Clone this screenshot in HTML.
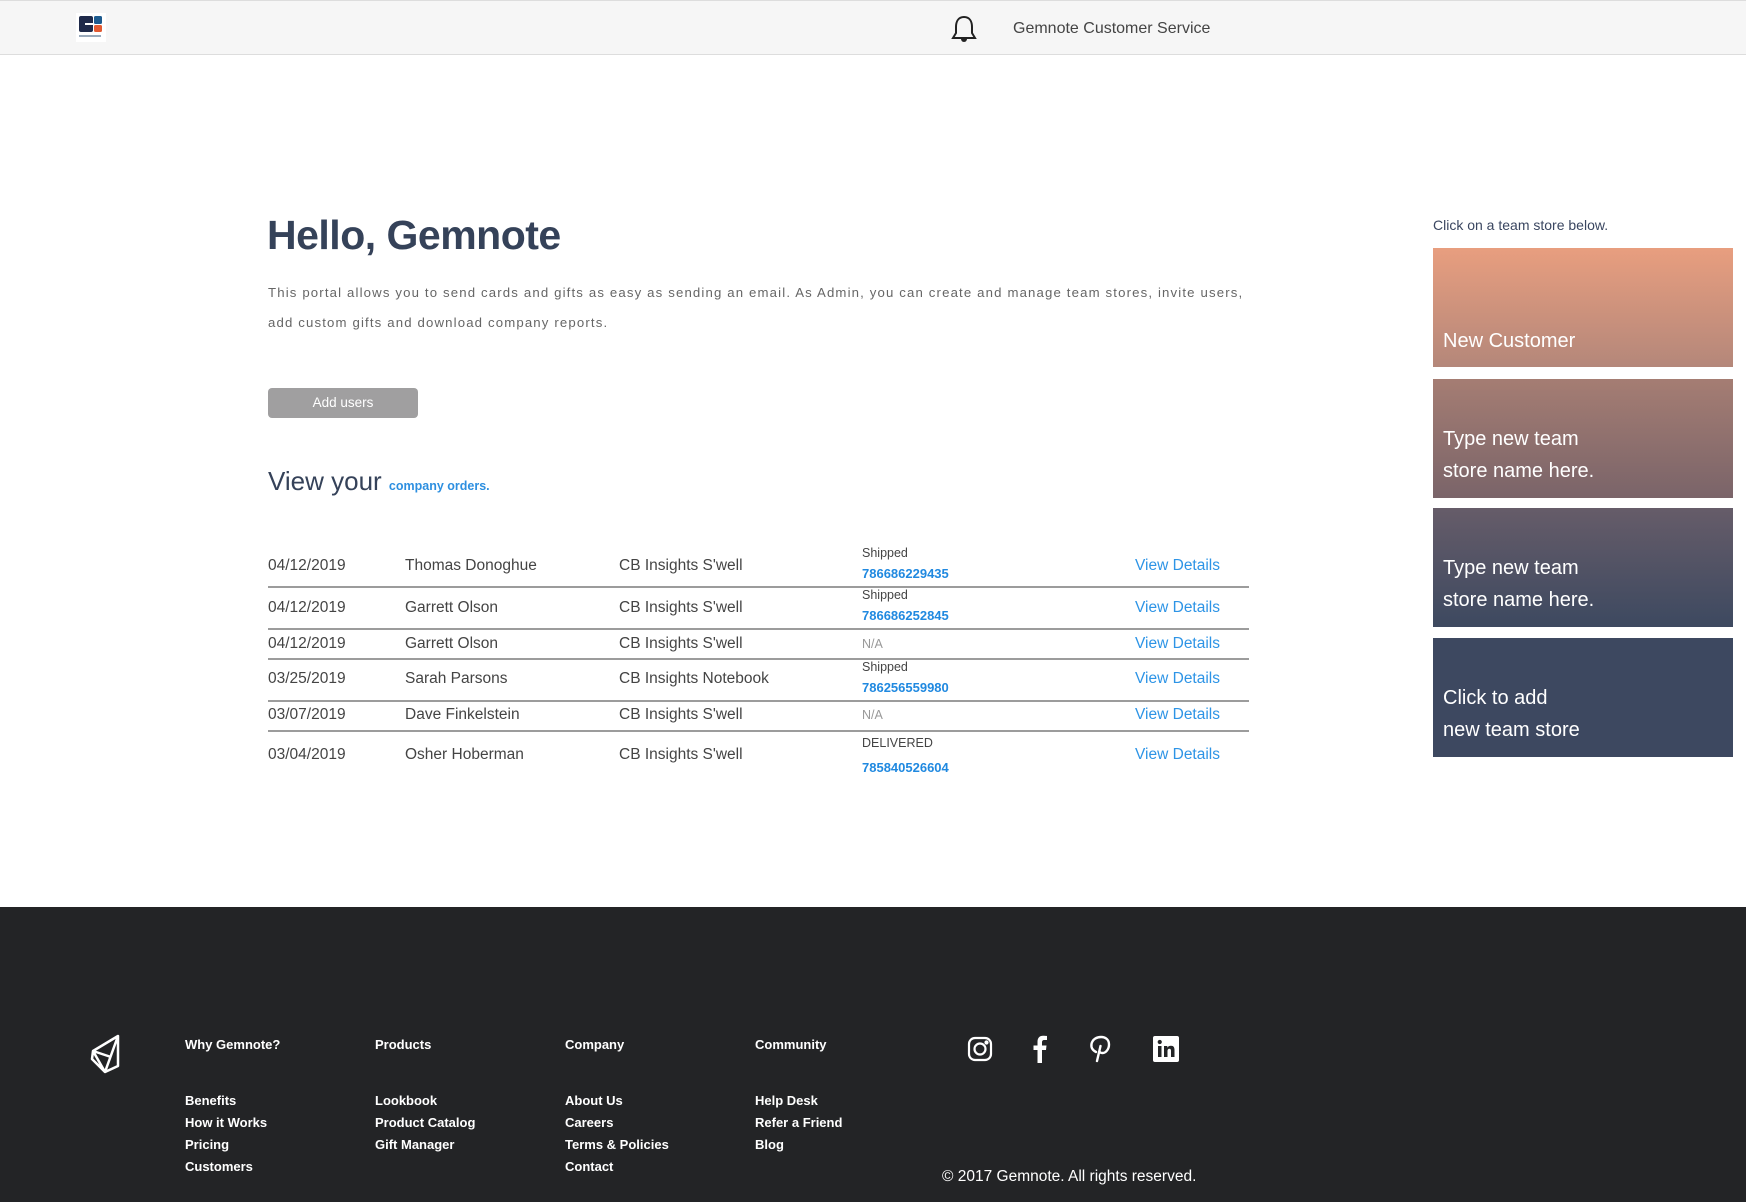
<!DOCTYPE html>
<html><head><meta charset="utf-8"><style>
*{margin:0;padding:0;box-sizing:border-box}
body{width:1746px;height:1202px;overflow:hidden;background:#fff;font-family:"Liberation Sans",sans-serif;position:relative;color:#444}
.abs{position:absolute;white-space:nowrap}
#hdr{position:absolute;left:0;top:0;width:1746px;height:55px;background:#f6f6f6;border-top:1px solid #ddd;border-bottom:1px solid #ddd}
.row{position:absolute;left:268px;width:981px;border-bottom:2px solid #9c9c9c}
.c{position:absolute;font-size:15.5px;color:#444;transform:translateY(-50%)}
.vd{color:#2d94e6}
.st{position:absolute;left:594px;font-size:12.5px;color:#444}
.tn{position:absolute;left:594px;font-size:13px;color:#2089e0;font-weight:bold}
.card{position:absolute;left:1433px;width:300px;height:119px;color:#fff;font-size:20px;padding-left:10px}
.card div{position:absolute;left:10px;line-height:32px}
#ftr{position:absolute;left:0;top:907px;width:1746px;height:295px;background:#232426}
.fh{position:absolute;color:#fff;font-size:13px;font-weight:bold;white-space:nowrap}
</style></head><body>
<div id="hdr">
 <svg class="abs" style="left:76px;top:12px" width="30" height="29" viewBox="0 0 30 29"><rect width="30" height="29" fill="#fff"/><rect x="3" y="3" width="14" height="16" rx="2" fill="#1f2a4a"/><rect x="18" y="3" width="8" height="8" rx="1.5" fill="#1d5b8f"/><rect x="18" y="12" width="8" height="7" rx="1.5" fill="#e25a32"/><rect x="9" y="10" width="9" height="2" fill="#fff"/><rect x="3" y="22" width="22" height="2" fill="#9aaabb"/></svg>
 <svg class="abs" style="left:951px;top:14px" width="26" height="29" viewBox="0 0 26 29"><path d="M13 2 C7 2 5 7 5 12 L5 18 L2 23 L24 23 L21 18 L21 12 C21 7 19 2 13 2Z" fill="none" stroke="#222" stroke-width="2"/><path d="M10 24 a3 3 0 0 0 6 0" fill="#222"/></svg>
 <div class="abs" style="left:1013px;top:19px;font-size:16px;color:#444">Gemnote Customer Service</div>
</div>

<div class="abs" style="left:267px;top:212px;font-size:41px;font-weight:bold;color:#354259;letter-spacing:-0.5px">Hello, Gemnote</div>
<div class="abs" style="left:268px;top:278px;font-size:13.2px;color:#666;letter-spacing:1.15px;line-height:30px">This portal allows you to send cards and gifts as easy as sending an email. As Admin, you can create and manage team stores, invite users,<br>add custom gifts and download company reports.</div>
<div class="abs" style="left:268px;top:388px;width:150px;height:30px;background:#a09fa0;border-radius:4px;color:#fff;font-size:13.5px;text-align:center;line-height:30px">Add users</div>
<div class="abs" style="left:268px;top:466px;font-size:26px;color:#354259">View your <span style="font-size:12.5px;color:#2d8fe0;font-weight:bold">company orders.</span></div>

<div class="row" style="top:545px;height:43px"><span class="c" style="left:0;top:21px">04/12/2019</span><span class="c" style="left:137px;top:21px">Thomas Donoghue</span><span class="c" style="left:351px;top:21px">CB Insights S'well</span><span class="st" style="top:1px">Shipped</span><span class="tn" style="top:21px">786686229435</span><span class="c vd" style="left:867px;top:21px">View Details</span></div>
<div class="row" style="top:588px;height:42px"><span class="c" style="left:0;top:20px">04/12/2019</span><span class="c" style="left:137px;top:20px">Garrett Olson</span><span class="c" style="left:351px;top:20px">CB Insights S'well</span><span class="st" style="top:0">Shipped</span><span class="tn" style="top:20px">786686252845</span><span class="c vd" style="left:867px;top:20px">View Details</span></div>
<div class="row" style="top:630px;height:30px"><span class="c" style="left:0;top:14px">04/12/2019</span><span class="c" style="left:137px;top:14px">Garrett Olson</span><span class="c" style="left:351px;top:14px">CB Insights S'well</span><span class="c" style="left:594px;top:14px;font-size:12.5px;color:#999">N/A</span><span class="c vd" style="left:867px;top:14px">View Details</span></div>
<div class="row" style="top:660px;height:42px"><span class="c" style="left:0;top:19px">03/25/2019</span><span class="c" style="left:137px;top:19px">Sarah Parsons</span><span class="c" style="left:351px;top:19px">CB Insights Notebook</span><span class="st" style="top:0">Shipped</span><span class="tn" style="top:20px">786256559980</span><span class="c vd" style="left:867px;top:19px">View Details</span></div>
<div class="row" style="top:702px;height:30px"><span class="c" style="left:0;top:13px">03/07/2019</span><span class="c" style="left:137px;top:13px">Dave Finkelstein</span><span class="c" style="left:351px;top:13px">CB Insights S'well</span><span class="c" style="left:594px;top:13px;font-size:12.5px;color:#999">N/A</span><span class="c vd" style="left:867px;top:13px">View Details</span></div>
<div class="row" style="top:732px;height:50px;border:none"><span class="c" style="left:0;top:23px">03/04/2019</span><span class="c" style="left:137px;top:23px">Osher Hoberman</span><span class="c" style="left:351px;top:23px">CB Insights S'well</span><span class="st" style="top:4px">DELIVERED</span><span class="tn" style="top:28px">785840526604</span><span class="c vd" style="left:867px;top:23px">View Details</span></div>

<div class="abs" style="left:1433px;top:217px;font-size:14px;color:#3a4660">Click on a team store below.</div>
<div class="card" style="top:248px;background:linear-gradient(#e89e7f,#b4877a)"><div style="top:77px">New Customer</div></div>
<div class="card" style="top:379px;background:linear-gradient(#a57d73,#7a6469)"><div style="top:44px">Type new team<br>store name here.</div></div>
<div class="card" style="top:508px;background:linear-gradient(#665c69,#3d4960)"><div style="top:44px">Type new team<br>store name here.</div></div>
<div class="card" style="top:638px;background:#3d4860"><div style="top:44px">Click to add<br>new team store</div></div>

<div id="ftr">
 <svg class="abs" style="left:89px;top:126px" width="32" height="42" viewBox="0 0 32 42" fill="none" stroke="#fff" stroke-width="2.5" stroke-linejoin="round"><path d="M29 3 L4 18 L3 26 L16 39 L29 33 Z M29 3 L16 39 M4 18 L16 39 M4 18 L22 24"/></svg>
 <div class="fh" style="left:185px;top:130px">Why Gemnote?</div>
 <div class="fh" style="left:375px;top:130px">Products</div>
 <div class="fh" style="left:565px;top:130px">Company</div>
 <div class="fh" style="left:755px;top:130px">Community</div>
 <div class="fh" style="left:185px;top:183px;line-height:22px">Benefits<br>How it Works<br>Pricing<br>Customers</div>
 <div class="fh" style="left:375px;top:183px;line-height:22px">Lookbook<br>Product Catalog<br>Gift Manager</div>
 <div class="fh" style="left:565px;top:183px;line-height:22px">About Us<br>Careers<br>Terms &amp; Policies<br>Contact</div>
 <div class="fh" style="left:755px;top:183px;line-height:22px">Help Desk<br>Refer a Friend<br>Blog</div>
 <svg class="abs" style="left:967px;top:129px" width="26" height="26" viewBox="0 0 26 26" fill="none" stroke="#fff" stroke-width="2.2"><rect x="2" y="2" width="22" height="22" rx="6"/><circle cx="13" cy="13" r="5.5"/><circle cx="19.5" cy="6.5" r="1" fill="#fff"/></svg>
 <svg class="abs" style="left:1033px;top:128px" width="14" height="28" viewBox="0 0 14 28"><path d="M9 28 V15 H13 L13.5 10.5 H9 V7.5 C9 6 9.5 5 11.5 5 H14 V1 C13 0.8 11.5 0.7 10 0.7 C6.5 0.7 4.5 3 4.5 6.8 V10.5 H0.5 V15 H4.5 V28 Z" fill="#fff"/></svg>
 <svg class="abs" style="left:1089px;top:128px" width="22" height="28" viewBox="0 0 22 28" fill="none" stroke="#fff" stroke-width="2.4" stroke-linecap="round"><path d="M8 26 L11.5 11 M7 17 C3 15 2 12 2.5 9 C3.5 4 8 2 12 2 C17 2 20 5 20 9.5 C20 14 17 18 13.5 18 C11.5 18 10.5 17 10.5 16"/></svg>
 <svg class="abs" style="left:1153px;top:129px" width="26" height="26" viewBox="0 0 26 26"><rect width="26" height="26" rx="2" fill="#fff"/><rect x="5" y="10" width="3.5" height="11" fill="#232426"/><circle cx="6.75" cy="6" r="2.1" fill="#232426"/><path d="M11 10 H14.3 V11.8 C15 10.6 16.3 9.8 18 9.8 C20.6 9.8 21.5 11.5 21.5 14 V21 H18 V14.8 C18 13.5 17.6 12.7 16.4 12.7 C15.1 12.7 14.5 13.6 14.5 15 V21 H11 Z" fill="#232426"/></svg>
 <div class="abs" style="left:942px;top:261px;font-size:15.5px;color:#fff">© 2017 Gemnote. All rights reserved.</div>
</div>
</body></html>
